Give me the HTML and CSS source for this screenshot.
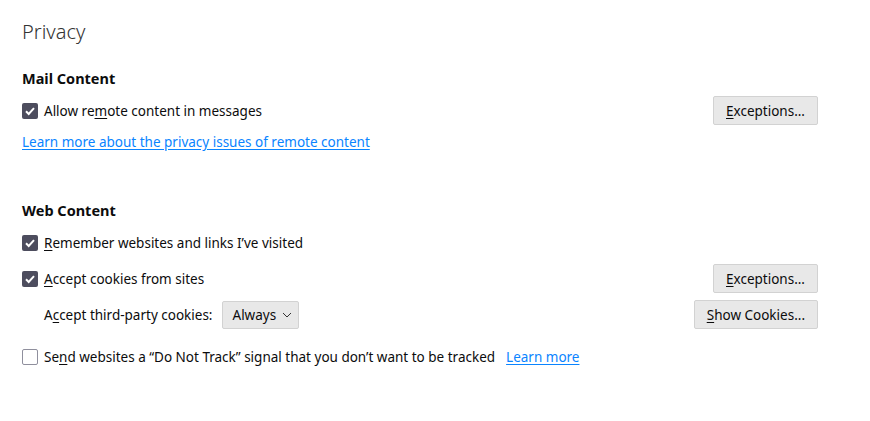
FILE: index.html
```html
<!DOCTYPE html>
<html lang="en">
<head>
    <meta charset="UTF-8">
    <title>Privacy</title>
    <link rel="stylesheet" href="styles.css">
</head>
<body>
    <div class="pane">
        <h1>Privacy</h1>

        <section class="group">
            <h2>Mail Content</h2>
            <div class="row">
                <label class="check"><span class="box on"></span>Allow re<u>m</u>ote content in messages</label>
                <button class="btn"><u>E</u>xceptions...</button>
            </div>
            <a class="link" href="#">Learn more about the privacy issues of remote content</a>
        </section>

        <section class="group web">
            <h2>Web Content</h2>
            <div class="row">
                <label class="check"><span class="box on"></span><u>R</u>emember websites and links I’ve visited</label>
            </div>
            <div class="row">
                <label class="check"><span class="box on"></span><u>A</u>ccept cookies from sites</label>
                <button class="btn"><u>E</u>xceptions...</button>
            </div>
            <div class="row">
                <div class="sub">
                    <span>A<u>c</u>cept third-party cookies:</span>
                    <button class="btn select">Always
                        <svg width="10" height="6" viewBox="0 0 10 6"><path d="M1 1l4 4 4-4" fill="none" stroke="#333" stroke-width="1"/></svg>
                    </button>
                </div>
                <button class="btn"><u>S</u>how Cookies...</button>
            </div>
            <div class="row dnt-row">
                <label class="check"><span class="box"></span>Se<u>n</u>d websites a “Do Not Track” signal that you don’t want to be tracked</label>
                <a class="link dnt" href="#">Learn more</a>
            </div>
        </section>
    </div>
</body>
</html>
```

FILE: styles.css
```css
body {
    margin: 0;
    background: #fff;
    color: #0c0c0d;
    font-family: "Noto Sans", "Open Sans", sans-serif;
    font-size: 13.5px;
}

.pane {
    padding: 18px 52px 0 22px;
}

h1 {
    margin: 0;
    font-size: 20px;
    font-weight: 300;
    color: #333;
    line-height: 28px;
}

h2 {
    margin: 0;
    font-size: 14.5px;
    font-weight: 700;
    line-height: 22px;
}

.group {
    margin-top: 21px;
}

.group.web {
    margin-top: 48px;
}

.row {
    display: flex;
    align-items: center;
    min-height: 29px;
    margin-top: 7px;
}

.dnt-row {
    margin-top: 13px;
}

.check {
    display: flex;
    align-items: center;
}

.box {
    width: 16px;
    height: 16px;
    box-sizing: border-box;
    border: 1px solid #8f8f9d;
    border-radius: 2px;
    margin-right: 6px;
    background: #fff;
    flex: none;
}

.box.on {
    border: none;
    background: #4d4d5e url("data:image/svg+xml,%3Csvg xmlns='http://www.w3.org/2000/svg' width='16' height='16'%3E%3Cpath d='M4 8.3l2.7 2.7L12 5.2' fill='none' stroke='white' stroke-width='2'/%3E%3C/svg%3E");
}

u {
    text-decoration-thickness: 1px;
    text-underline-offset: 2px;
}

.btn {
    margin-left: auto;
    font: inherit;
    color: #0c0c0d;
    background: #e8e8e8;
    border: 1px solid #d2d2d2;
    border-radius: 2px;
    height: 29px;
    padding: 0 12px;
}

.sub {
    display: flex;
    align-items: center;
    padding-left: 22px;
}

.btn.select {
    margin-left: 9px;
    padding: 0 6px 0 10px;
    height: 28px;
    display: flex;
    align-items: center;
    gap: 6px;
}

.link {
    display: inline-block;
    color: #0a84ff;
    margin-top: 8px;
    text-underline-offset: 2px;
}

.dnt {
    margin: 0 0 0 11px;
}
```
